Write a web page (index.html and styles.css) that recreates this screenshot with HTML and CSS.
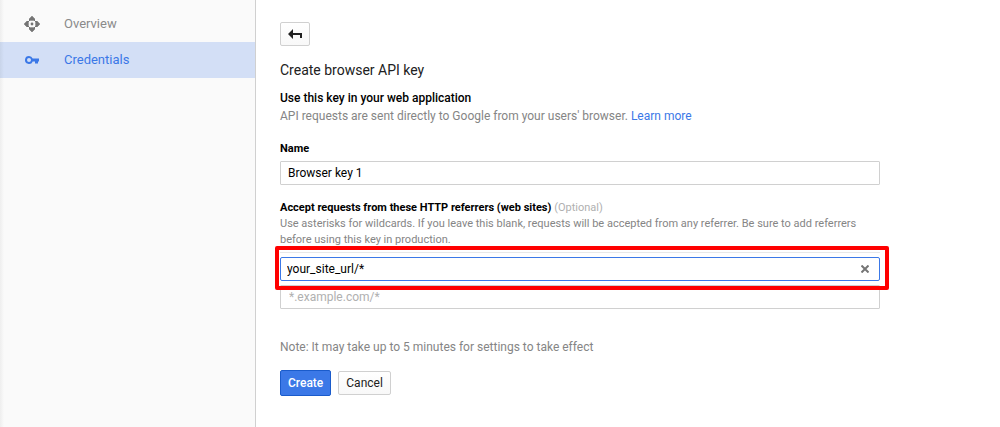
FILE: index.html
```html
<!DOCTYPE html>
<html lang="en">
<head>
<meta charset="utf-8">
<meta name="viewport" content="width=device-width, initial-scale=1">
<title>Create browser API key</title>
<link rel="stylesheet" href="styles.css">
</head>
<body>
<div class="layout">
  <nav class="sidebar" aria-label="API Manager">
    <a class="nav-item" href="#overview">
      <svg class="nav-icon" viewBox="0 0 16 16" aria-hidden="true">
        <path d="M8 0 11 3V5H10L8 3.500 6 5H5V3ZM8 16 11 13V11H10L8 12.500 6 11H5V13ZM0 8 3 5H5V6L3.500 8 5 10V11H3ZM16 8 13 5H11V6L12.500 8 11 10V11H13Z"/>
        <path d="M8 0 11 3 8 5 5 3ZM8 16 11 13 8 11 5 13ZM0 8 3 5 5 8 3 11ZM16 8 13 5 11 8 13 11Z"/>
        <circle cx="8" cy="8" r="1.400"/>
      </svg>
      <span>Overview</span>
    </a>
    <a class="nav-item nav-item-active" href="#credentials" aria-current="page">
      <svg class="nav-icon" viewBox="0 0 16 16" aria-hidden="true">
        <path fill-rule="evenodd" d="M5 4a4 4 0 1 0 3.700 5.500H11V11.500h3V9.500h1v-3H8.700A4 4 0 0 0 5 4Zm0 2a2 2 0 1 1 0 4a2 2 0 0 1 0-4Z"/>
      </svg>
      <span>Credentials</span>
    </a>
  </nav>
  <main class="content">
    <button class="button back" type="button" aria-label="Back">
      <svg class="back-icon" viewBox="0 0 14 10" aria-hidden="true">
        <path d="M0 5 5 0V4H14V9H12V6H5V10Z"/>
      </svg>
    </button>
    <h1 class="title">Create browser API key</h1>
    <h2 class="subtitle">Use this key in your web application</h2>
    <p class="text intro">API requests are sent directly to Google from your users' browser. <a class="link" href="#learn-more">Learn more</a></p>
    <form class="form">
      <label class="label name-label" for="name">Name</label>
      <input class="input" id="name" type="text" value="Browser key 1">
      <label class="label referrer-label" for="referrer">Accept requests from these HTTP referrers (web sites) <span class="optional">(Optional)</span></label>
      <p class="text help" id="referrer-help">Use asterisks for wildcards. If you leave this blank, requests will be accepted from any referrer. Be sure to add referrers before using this key in production.</p>
      <div class="referrers">
        <div class="referrer-row">
          <input class="input input-active" id="referrer" type="text" value="your_site_url/*" aria-describedby="referrer-help">
          <button class="clear" type="button" aria-label="Remove referrer">
            <svg class="clear-icon" viewBox="0 0 8 8" aria-hidden="true"><path d="M0.500 0.500 7.500 7.500M7.500 0.500 0.500 7.500"/></svg>
          </button>
        </div>
        <input class="input input-empty" type="text" placeholder="*.example.com/*" aria-label="Another referrer">
        <div class="highlight"></div>
      </div>
      <p class="text note">Note: It may take up to 5 minutes for settings to take effect</p>
      <div class="actions">
        <button class="button primary" type="button">Create</button>
        <button class="button" type="button">Cancel</button>
      </div>
    </form>
  </main>
</div>
</body>
</html>
```
FILE: styles.css
```css
* {
  box-sizing: border-box;
}

body {
  margin: 0;
  background: #fff;
  color: #212121;
  font: 12px/16px Roboto, sans-serif;
}

h1, h2, p {
  margin: 0;
}

.layout {
  display: flex;
  min-height: 100vh;
}

.sidebar {
  flex: 0 0 256px;
  padding-top: 6px;
  border-right: 1px solid #d0d0d0;
  background: linear-gradient(to right, #eee, #fafafa 4px);
}

.nav-item {
  display: flex;
  align-items: center;
  gap: 24px;
  height: 36px;
  padding-left: 24px;
  color: #8a8a8a;
  font-size: 13px;
  text-decoration: none;
}

.nav-item-active {
  background: linear-gradient(to right, #c8d4e9, #d3dff6 4px);
  color: #3b78e7;
}

.nav-icon {
  width: 16px;
  height: 16px;
  fill: #757575;
}

.nav-item-active .nav-icon {
  fill: #3b78e7;
}

.content {
  flex: 1;
  min-width: 0;
  padding: 22px 24px;
}

.button {
  height: 24px;
  padding: 0 7px;
  border: 1px solid #d0d0d0;
  border-radius: 2px;
  background: linear-gradient(#fff, #f8f8f8);
  color: #212121;
  font: 12px/16px Roboto, sans-serif;
}

.back {
  display: flex;
  align-items: center;
  justify-content: center;
  width: 30px;
}

.back-icon {
  flex: none;
  width: 14px;
  height: 10px;
  fill: #212121;
}

.title {
  margin-top: 14px;
  font-size: 14px;
  font-weight: 400;
  line-height: 20px;
}

.subtitle {
  margin-top: 10px;
  color: #000;
  font-size: 12px;
  font-weight: 500;
}

.text {
  color: #858585;
}

.intro {
  margin-top: 2px;
}

.help {
  font-size: 11px;
}

.link {
  color: #3b78e7;
  text-decoration: none;
}

.form {
  max-width: 600px;
}

.label {
  display: block;
  color: #000;
  font-size: 11px;
  font-weight: 700;
}

.name-label {
  margin: 17px 0 4px;
}

.referrer-label {
  margin-top: 15px;
}

.optional {
  color: #b0b0b0;
  font-weight: 400;
}

.input {
  display: block;
  width: 100%;
  height: 24px;
  padding: 0 7px;
  border: 1px solid #d0d0d0;
  border-radius: 1px;
  outline: none;
  background: #fff;
  color: #000;
  font: 12px/16px Roboto, sans-serif;
}

.input-empty {
  padding: 0 8px;
}

.input::placeholder {
  color: #b0b0b0;
  opacity: 1;
}

.referrers {
  position: relative;
  display: grid;
  gap: 4px;
  margin-top: 4px;
  padding-top: 4px;
  border-top: 1px solid #e8e8e8;
}

.referrer-row {
  position: relative;
}

.input-active {
  padding: 0 28px 0 6px;
  border-color: #3b78e7;
  border-radius: 2px;
}

.clear {
  position: absolute;
  top: 4px;
  right: 7px;
  display: grid;
  place-items: center;
  width: 16px;
  height: 16px;
  padding: 0;
  border: 0;
  background: none;
}

.clear-icon {
  width: 8px;
  height: 8px;
  fill: none;
  stroke: #757575;
  stroke-width: 2px;
}

.highlight {
  position: absolute;
  top: -7px;
  right: -9px;
  left: -5px;
  height: 44px;
  border: 4px solid #f00;
  border-radius: 2px;
  pointer-events: none;
}

.note {
  margin-top: 30px;
}

.actions {
  display: flex;
  align-items: center;
  gap: 7px;
  margin-top: 15px;
}

.primary {
  height: 26px;
  border-color: #1a5bcb;
  background: #3b78e7;
  color: #fff;
  font-weight: 500;
}
```
